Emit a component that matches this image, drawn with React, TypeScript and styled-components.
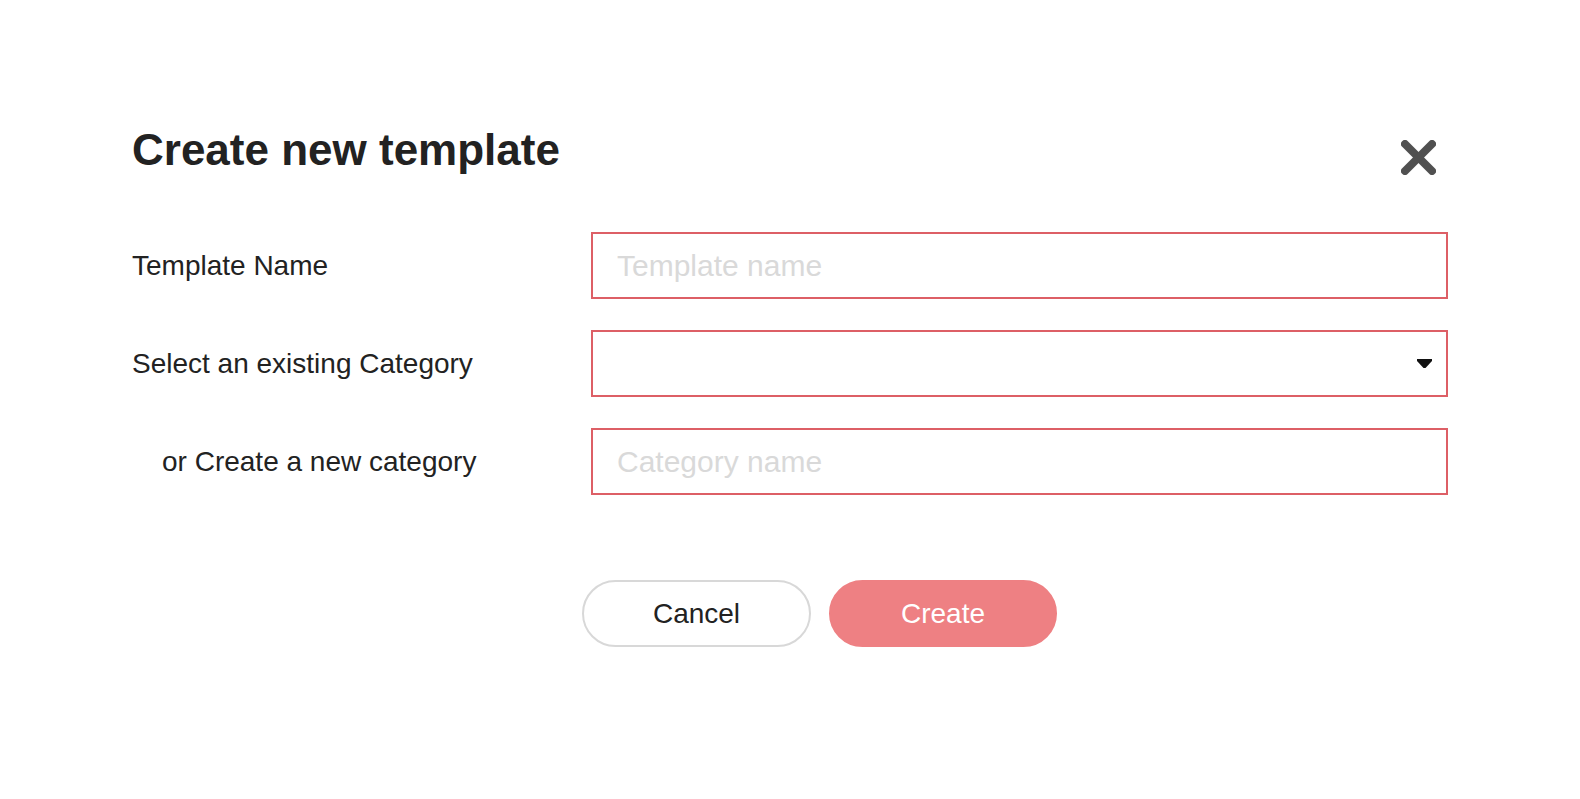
import React from 'react'
import styled, { createGlobalStyle } from 'styled-components'

const GlobalStyle = createGlobalStyle`
  html, body {
    margin: 0;
    padding: 0;
    background: #ffffff;
  }

  body {
    font-family: 'Liberation Sans', Arial, Helvetica, sans-serif;
    color: #222222;
  }
`

const colors = {
  text: '#222222',
  border: '#dd5f66',
  placeholder: '#d9d9d9',
  primary: '#ee8083',
  muted: '#d8d8d8',
  icon: '#505050',
}

const Dialog = styled.section`
  width: 1316px;
  margin: 0 auto;
  padding-top: 125px;
`

const Header = styled.header`
  display: flex;
  justify-content: space-between;
  align-items: flex-start;
`

const Title = styled.h1`
  margin: 0;
  font-size: 44px;
  line-height: 50px;
  font-weight: 700;
  color: ${colors.text};
`

const CloseButton = styled.button`
  display: flex;
  width: 35px;
  height: 35px;
  margin: 15px 12px 0 0;
  padding: 0;
  border: none;
  background: none;
  cursor: pointer;
`

const Form = styled.form`
  display: grid;
  grid-template-columns: 459px 1fr;
  grid-auto-rows: 67px;
  row-gap: 31px;
  margin-top: 57px;
`

const Label = styled.label<{ $indent?: boolean }>`
  display: flex;
  align-items: center;
  padding-left: ${({ $indent }) => ($indent ? '30px' : '0')};
  font-size: 28px;
  color: ${colors.text};
`

const TextInput = styled.input`
  box-sizing: border-box;
  width: 100%;
  height: 67px;
  padding: 0 24px;
  border: 2px solid ${colors.border};
  border-radius: 0;
  outline: none;
  font-family: inherit;
  font-size: 30px;
  color: ${colors.text};

  &::placeholder {
    color: ${colors.placeholder};
  }
`

const SelectBox = styled.div`
  box-sizing: border-box;
  display: flex;
  align-items: center;
  height: 67px;
  padding-right: 14px;
  border: 2px solid ${colors.border};
`

const Select = styled.select`
  flex: 1;
  height: 100%;
  padding: 0 24px;
  border: none;
  outline: none;
  background: transparent;
  appearance: none;
  font-family: inherit;
  font-size: 30px;
  color: ${colors.text};
`

const Actions = styled.div`
  display: flex;
  justify-content: center;
  gap: 18px;
  margin-top: 85px;
  padding-left: 59px;
`

const Button = styled.button<{ $primary?: boolean }>`
  box-sizing: border-box;
  width: ${({ $primary }) => ($primary ? '228px' : '229px')};
  height: 67px;
  border-radius: 34px;
  border: 2px solid ${({ $primary }) => ($primary ? colors.primary : colors.muted)};
  background: ${({ $primary }) => ($primary ? colors.primary : '#ffffff')};
  color: ${({ $primary }) => ($primary ? '#ffffff' : colors.text)};
  font-family: inherit;
  font-size: 28px;
  cursor: pointer;
`

const CloseIcon = () => (
  <svg width="35" height="35" viewBox="0 0 35 35">
    <g stroke={colors.icon} strokeWidth="8" strokeLinecap="round">
      <line x1="4" y1="4" x2="31" y2="31" />
      <line x1="31" y1="4" x2="4" y2="31" />
    </g>
  </svg>
)

const Caret = () => (
  <svg width="15" height="9" viewBox="0 0 15 9">
    <polygon points="0,0 15,0 15,2 8.5,9 6.5,9 0,2" fill="#111111" />
  </svg>
)

export default function App() {
  return (
    <>
      <GlobalStyle />
      <Dialog>
        <Header>
          <Title>Create new template</Title>
          <CloseButton aria-label="Close">
            <CloseIcon />
          </CloseButton>
        </Header>
        <Form onSubmit={(e) => e.preventDefault()}>
          <Label htmlFor="template-name">Template Name</Label>
          <TextInput id="template-name" placeholder="Template name" />

          <Label htmlFor="category-select">Select an existing Category</Label>
          <SelectBox>
            <Select id="category-select" defaultValue="">
              <option value="" />
            </Select>
            <Caret />
          </SelectBox>

          <Label $indent htmlFor="category-name">
            or Create a new category
          </Label>
          <TextInput id="category-name" placeholder="Category name" />
        </Form>
        <Actions>
          <Button type="button">Cancel</Button>
          <Button type="button" $primary>
            Create
          </Button>
        </Actions>
      </Dialog>
    </>
  )
}
